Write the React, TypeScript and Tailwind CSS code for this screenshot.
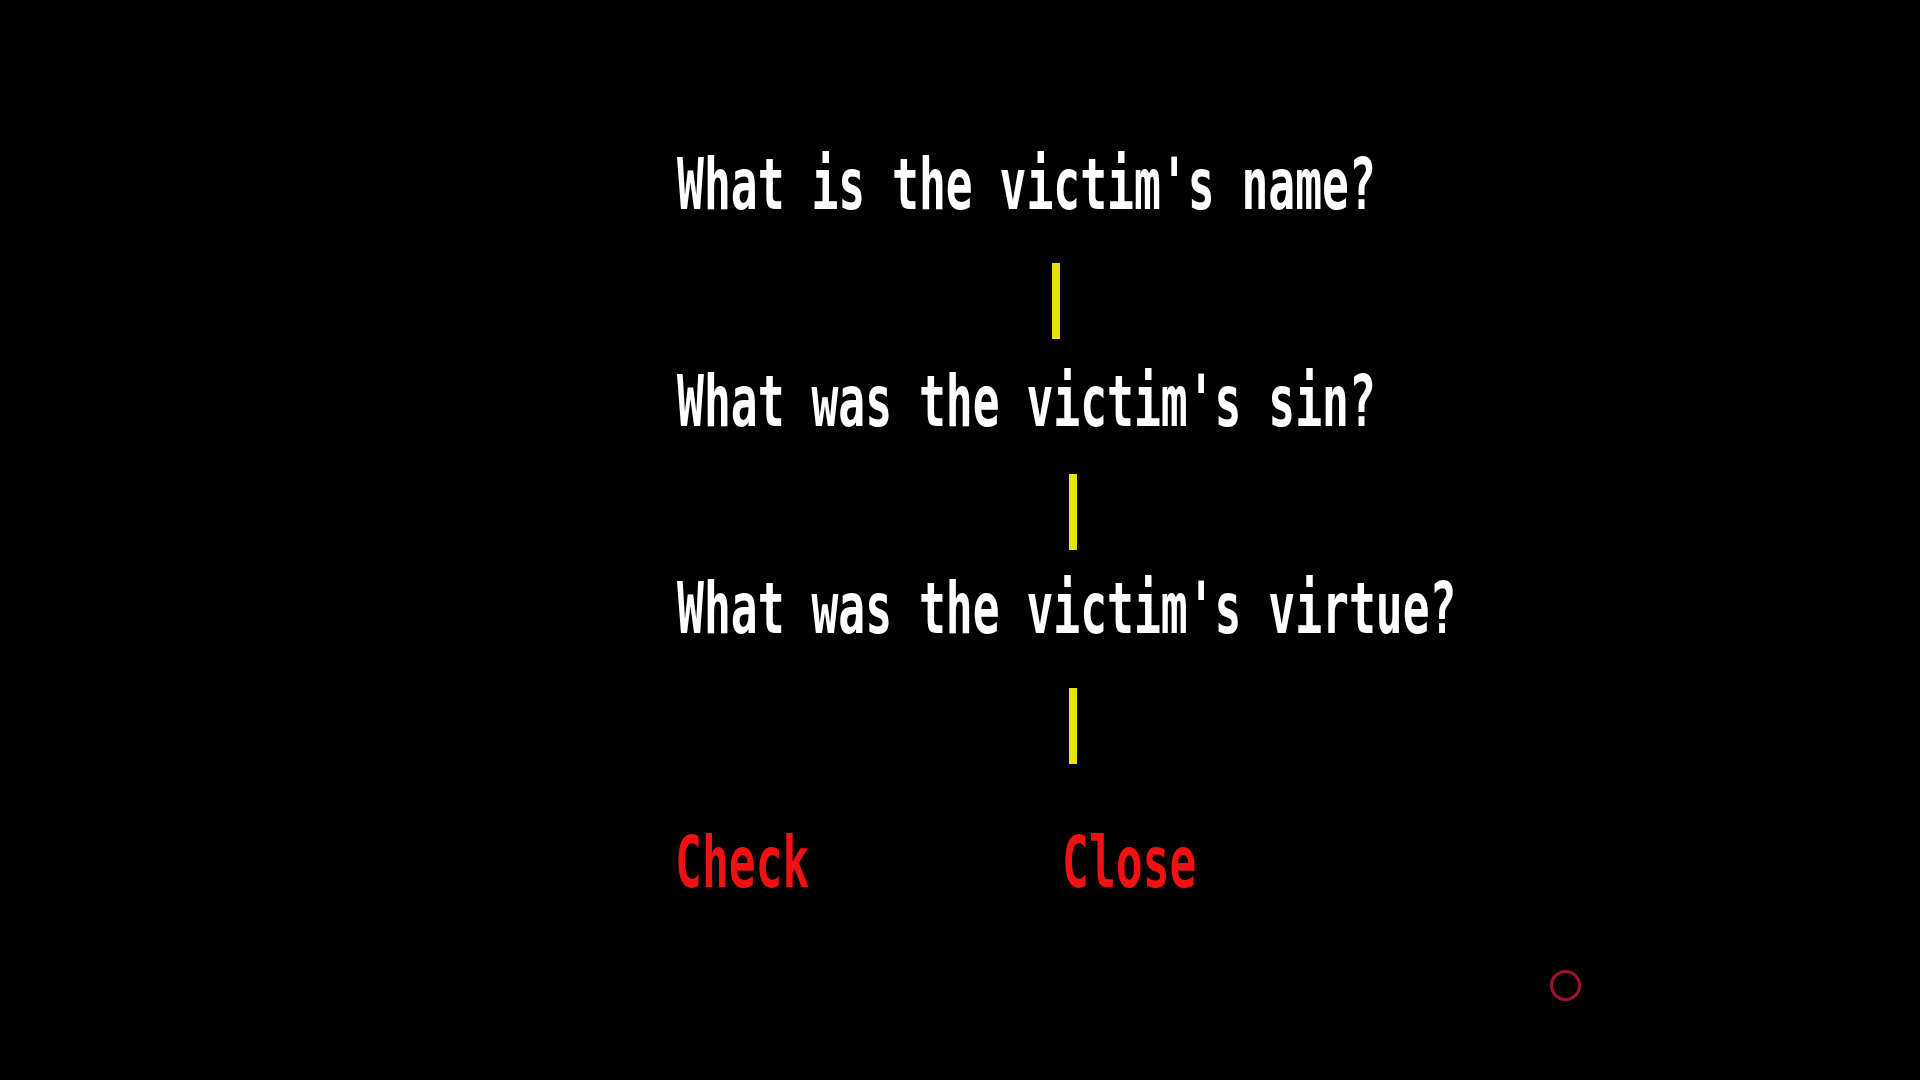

const QUESTIONS = [
  { text: "What is the victim's name?", caretOffset: 'ml-[375px]' },
  { text: "What was the victim's sin?", caretOffset: 'ml-[392px]' },
  { text: "What was the victim's virtue?", caretOffset: 'ml-[392px]' },
];

function Caret({ className }: { className: string }) {
  return <div className={`h-[76px] w-[8px] bg-[#e8e40a] ${className}`} />;
}

function PixelText({ children, color }: { children: string; color: string }) {
  return (
    <div
      className={`origin-left scale-x-[0.62] whitespace-pre text-[72px] leading-none font-bold ${color}`}
      style={{ fontFamily: '"DejaVu Sans Mono", "Liberation Mono", monospace' }}
    >
      {children}
    </div>
  );
}

export default function App() {
  return (
    <div className="relative h-screen w-full overflow-hidden bg-black">
      <div className="flex flex-col pl-[677px] pt-[148px]">
        <PixelText color="text-white">{QUESTIONS[0].text}</PixelText>
        <Caret className={`mt-[43px] ${QUESTIONS[0].caretOffset}`} />

        <div className="mt-[26px]">
          <PixelText color="text-white">{QUESTIONS[1].text}</PixelText>
        </div>
        <Caret className={`mt-[37px] ${QUESTIONS[1].caretOffset}`} />

        <div className="mt-[22px]">
          <PixelText color="text-white">{QUESTIONS[2].text}</PixelText>
        </div>
        <Caret className={`mt-[44px] ${QUESTIONS[2].caretOffset}`} />

        {/* Actions */}
        <div className="mt-[62px] flex -ml-[2px]">
          <div className="w-[387px]">
            <PixelText color="text-[#f01212]">Check</PixelText>
          </div>
          <div>
            <PixelText color="text-[#f01212]">Close</PixelText>
          </div>
        </div>
      </div>

      {/* Pointer ring */}
      <div className="absolute left-[1550px] top-[970px] h-[31px] w-[31px] rounded-full border-[3px] border-[#a3102f]" />
    </div>
  );
}
